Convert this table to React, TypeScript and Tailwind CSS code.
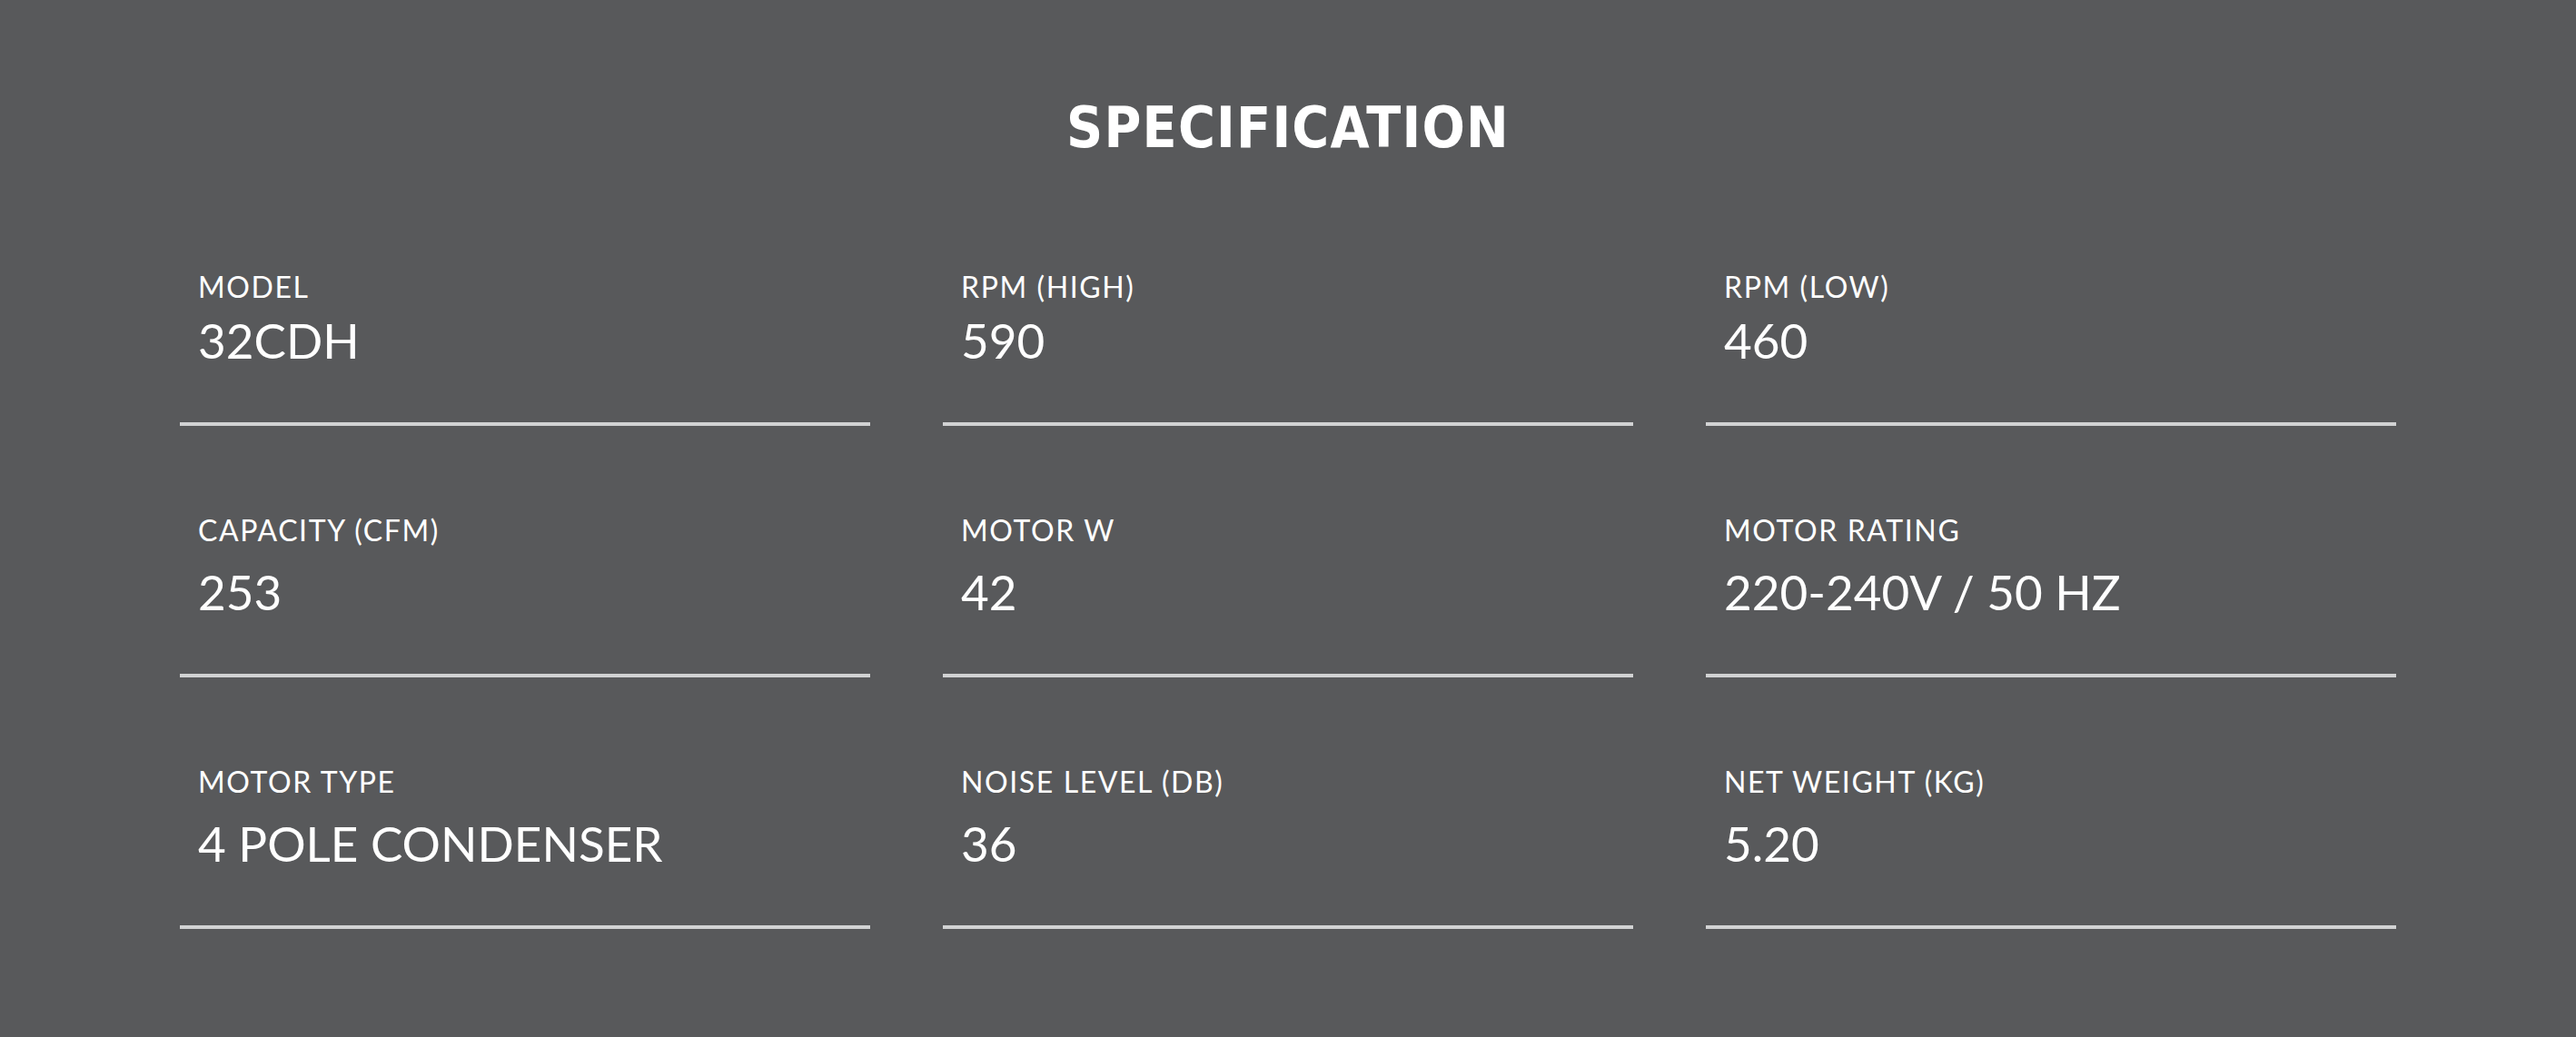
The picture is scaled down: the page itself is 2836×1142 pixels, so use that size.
const specs = [
  { label: 'MODEL', value: '32CDH' },
  { label: 'RPM (HIGH)', value: '590' },
  { label: 'RPM (LOW)', value: '460' },
  { label: 'CAPACITY (CFM)', value: '253' },
  { label: 'MOTOR W', value: '42' },
  { label: 'MOTOR RATING', value: '220-240V / 50 HZ' },
  { label: 'MOTOR TYPE', value: '4 POLE CONDENSER' },
  { label: 'NOISE LEVEL (DB)', value: '36' },
  { label: 'NET WEIGHT (KG)', value: '5.20' },
];

function SpecCell({ label, value, first }: { label: string; value: string; first: boolean }) {
  return (
    <div className="border-b-4 border-[#d1d2d3] px-5 pb-[64px]">
      <div className="text-[32px] leading-none tracking-[0.05em] text-white">{label}</div>
      <div className={`text-[53px] leading-none text-white ${first ? 'mt-[16px]' : 'mt-[25px]'}`}>{value}</div>
    </div>
  );
}

export default function App() {
  return (
    <div className="min-h-[1142px] w-full bg-[#58595b] pt-[110px] [font-family:Lato,'Open_Sans',sans-serif]">
      <h1 className="text-center text-[62px] font-bold leading-none tracking-[0.02em] text-white font-stretch-condensed [font-family:'DejaVu_Sans_Condensed','DejaVu_Sans',sans-serif]">
        SPECIFICATION
      </h1>

      <div className="mx-auto mt-[128px] grid w-[2440px] grid-cols-3 gap-x-[80px] gap-y-[99px]">
        {specs.map((s, i) => (
          <SpecCell key={s.label} label={s.label} value={s.value} first={i < 3} />
        ))}
      </div>
    </div>
  );
}
